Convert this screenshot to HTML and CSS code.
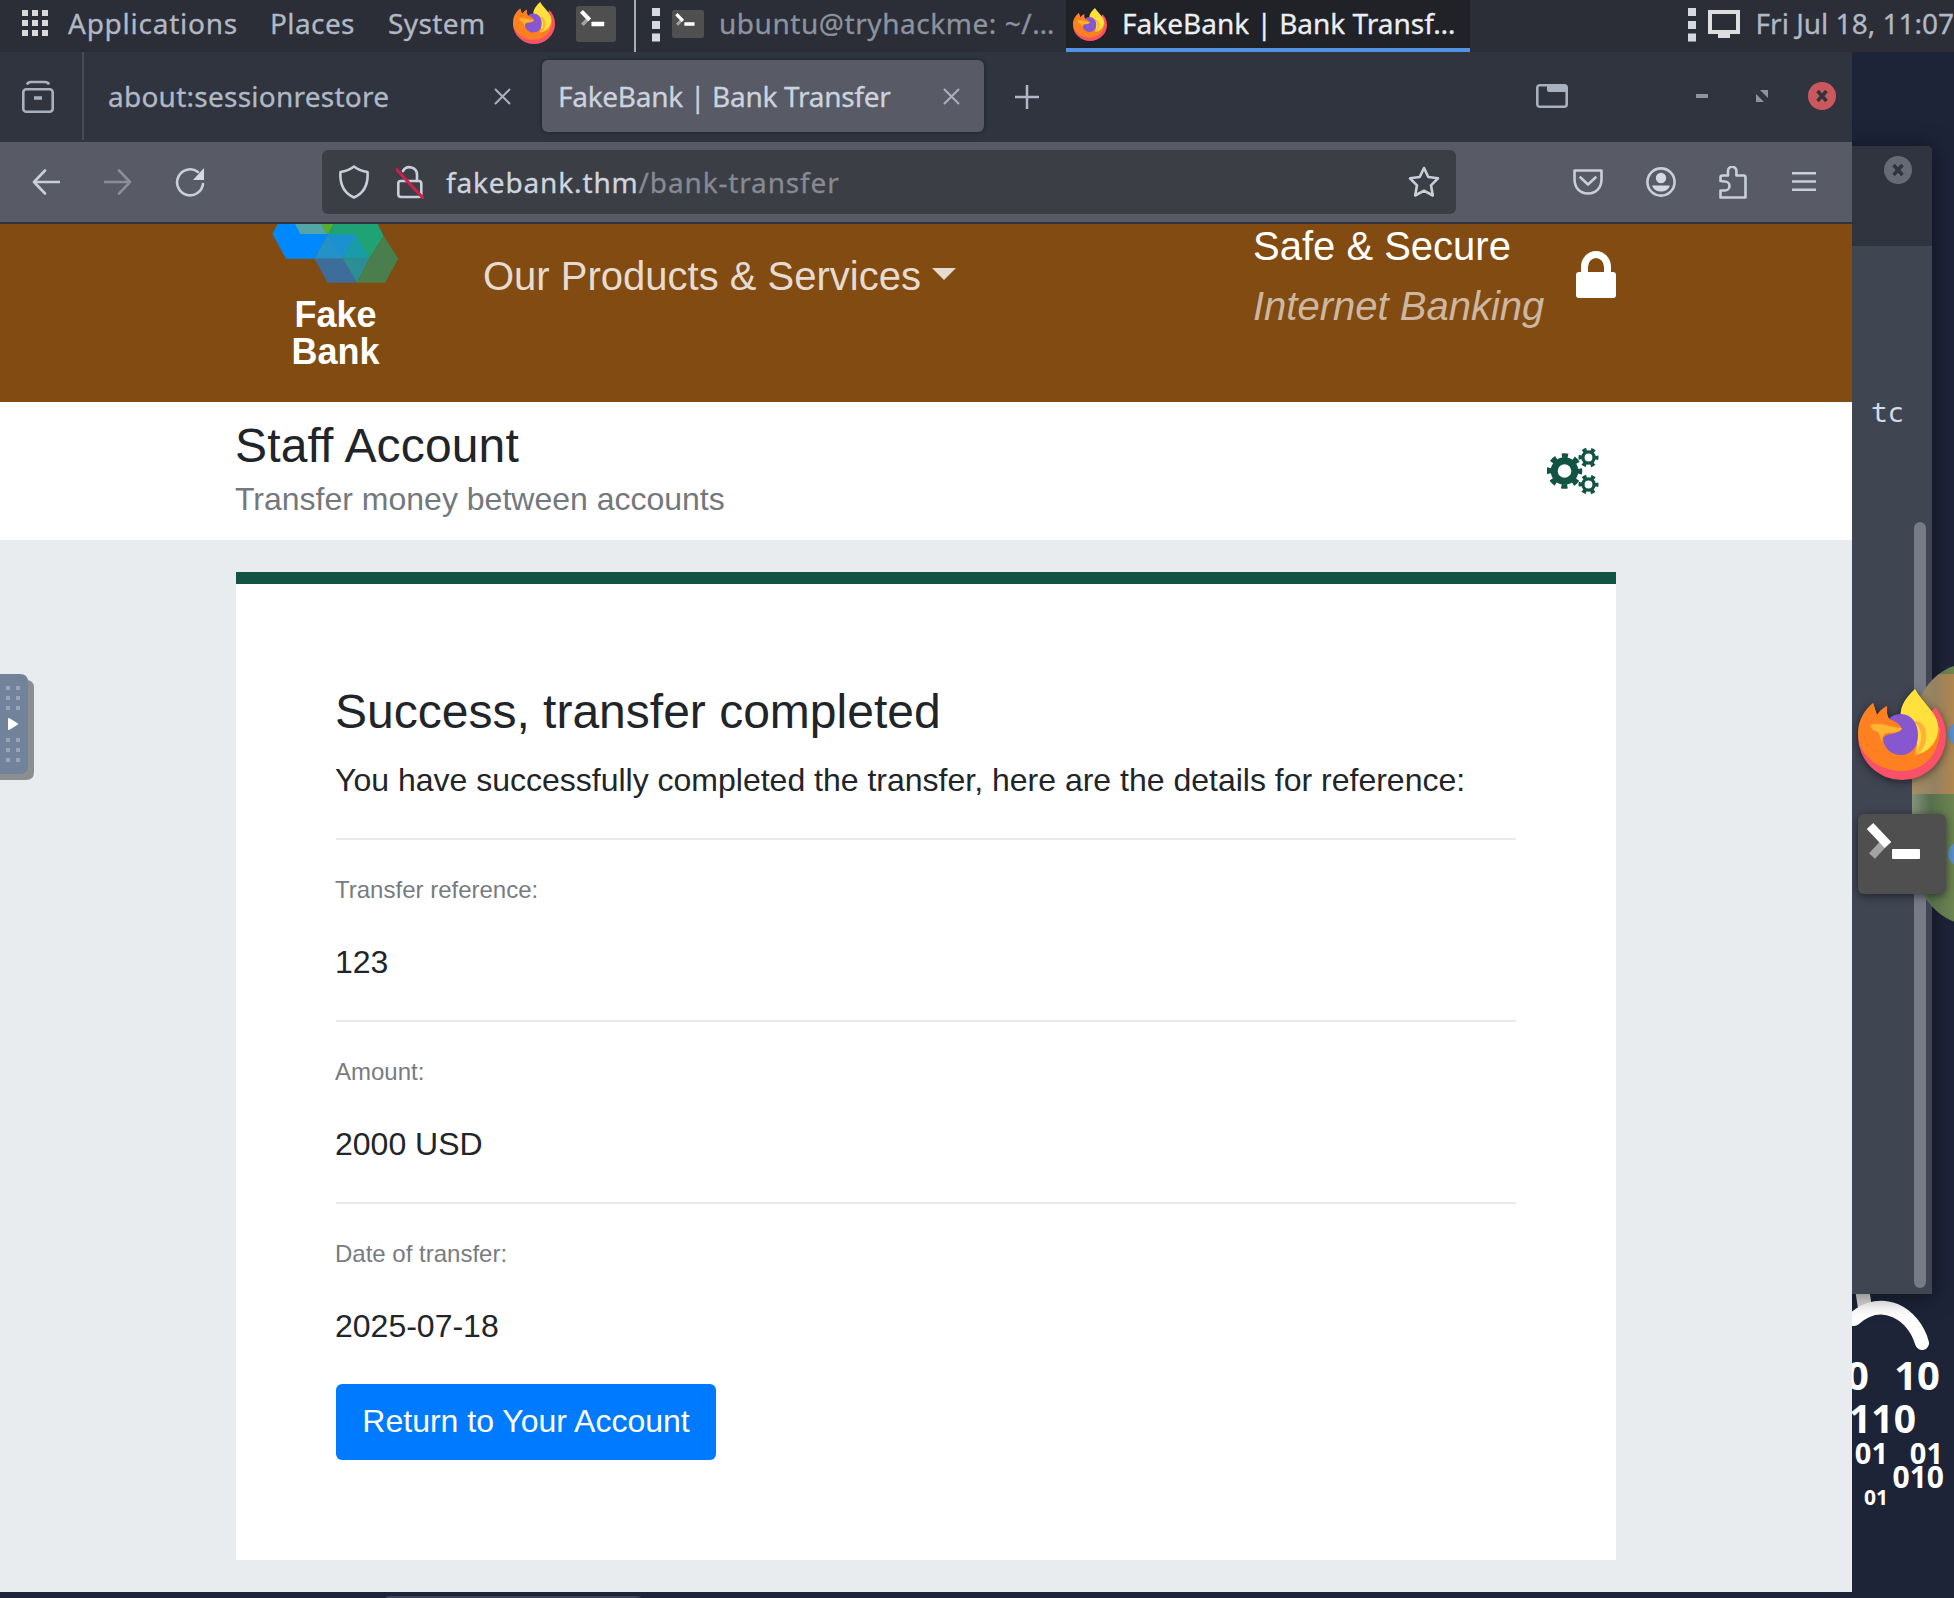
FILE: index.html
```html
<!DOCTYPE html>
<html lang="en">
<head>
<meta charset="utf-8">
<title>FakeBank | Bank Transfer</title>
<link rel="stylesheet" href="styles.css">
</head>
<body>
<svg class="sprite" aria-hidden="true">
  <symbol id="firefox" viewBox="0 0 88 91" preserveAspectRatio="none">
    <path fill="#f9516a" d="M0 47A44 44 0 0 0 88 47C88 36 84 26 77 18L60 40H20Z"/>
    <path fill="#ff8020" d="M0 44C0 31 7 20 15 14L19 26Q23 20 29 17Q28 25 31 30C44 32 52 36 60 42L82 38C83 63 67 82 44 82C20 82 0 66 0 44Z"/>
    <path fill="#ffe03c" d="M57 0C45 11 41 20 43 32C56 34 63 46 57 66C74 63 82 48 80 35C78 23 64 13 57 0Z"/>
    <path fill="#ffb13a" d="M51 31C65 35 67 52 56 67C70 62 72 40 62 33Z"/>
    <path fill="#8657ce" d="M43 25C53 25 60 34 60 46C60 58 53 66 43 66C33 66 25 59 25 48C25 36 30 25 43 25Z"/>
    <path fill="#ff8020" d="M15 14L19 26Q23 20 29 17Q28 25 31 30Q41 33 44 40C40 46 27 43 24 51Q21 42 8 40Z"/>
    <path fill="#ffb530" d="M12 36C20 32 31 38 44 39C42 44 34 44 27 44Q24 47 24 54Q22 46 20 43Q14 42 12 36Z"/>
  </symbol>
  <symbol id="terminal" viewBox="0 0 88 80" preserveAspectRatio="none">
    <rect width="88" height="80" rx="6" fill="#4f4f4f"/>
    <path d="M14 42L27 28" stroke="#a3a3a3" stroke-width="8"/>
    <path d="M12 12L30 31" stroke="#fff" stroke-width="9"/>
    <rect x="34" y="35" width="28" height="10" rx="1" fill="#fff"/>
  </symbol>
</svg>

<div class="desktop">
  <svg class="wallpaper" viewBox="0 0 102 1546" width="102" height="1546">
    <g fill="none" stroke="#fff" stroke-width="14" stroke-linecap="round">
      <path d="M9 1230L13 1256" stroke="#ddd"/>
      <path d="M2 1267C30 1242 62 1262 70 1291"/>
    </g>
    <g fill="#fff" text-anchor="end" class="bits">
      <text x="17" y="1338" font-size="40">0</text>
      <text x="88" y="1338" font-size="40">10</text>
      <text x="64" y="1381" font-size="39">110</text>
      <text x="36" y="1412" font-size="29">101</text>
      <text x="91" y="1412" font-size="29">01</text>
      <text x="92" y="1436" font-size="30">010</text>
      <text x="36" y="1453" font-size="21">01</text>
    </g>
  </svg>

  <section class="terminal-window">
    <header class="terminal-head">
      <svg class="terminal-close" viewBox="0 0 28 28"><circle cx="14" cy="14" r="14" fill="#666a74"/><path d="M9.5 9l9 10m0-10l-9 10" stroke="#2f343f" stroke-width="3.4"/></svg>
    </header>
    <div class="terminal-body">tc<i class="scrollbar"></i></div>
  </section>

  <svg class="cloud" viewBox="0 0 46 262" width="46" height="262">
    <defs>
      <linearGradient id="warm"><stop offset="0" stop-color="#a38d68"/><stop offset=".5" stop-color="#94815f"/><stop offset="1" stop-color="#b5874a"/></linearGradient>
      <linearGradient id="leaf"><stop offset="0" stop-color="#84927c"/><stop offset=".4" stop-color="#566f4e"/><stop offset="1" stop-color="#70884f"/></linearGradient>
      <clipPath id="blob"><path d="M46 2C26 6 0 30 0 70V190C0 228 24 254 46 260Z"/></clipPath>
    </defs>
    <g clip-path="url(#blob)">
      <rect width="46" height="262" fill="url(#leaf)"/>
      <rect y="11" width="46" height="120" fill="url(#warm)"/>
      <circle cx="48" cy="71" r="12" fill="#5a8fce"/>
      <circle cx="48" cy="191" r="12" fill="#5a8fce"/>
    </g>
  </svg>

  <svg class="launcher launcher-fox"><use href="#firefox"/></svg>
  <svg class="launcher launcher-term"><use href="#terminal"/></svg>

  <main class="browser">
    <div class="tabs">
      <div class="recent">
        <svg width="32" height="34" viewBox="0 0 32 34" fill="none" stroke="#a9b1bf" stroke-width="2.6"><rect x="1.3" y="9.3" width="29.4" height="22.4" rx="3"/><path d="M5 4.500Q6 2 9 2H23Q26 2 27 4.500"/><path d="M12 18h8" stroke-width="3.500"/></svg>
      </div>
      <div class="tab">
        <span class="t-session">about:sessionrestore</span>
        <svg class="x" viewBox="0 0 17 17"><path d="M1 1l15 15M16 1L1 16"/></svg>
      </div>
      <div class="tab tab-active">
        <span class="t-bank">FakeBank | Bank Transfer</span>
        <svg class="x" viewBox="0 0 17 17"><path d="M1 1l15 15M16 1L1 16"/></svg>
      </div>
      <svg class="plus" viewBox="0 0 24 24"><path d="M12 0v24M0 12h24"/></svg>
      <div class="controls">
        <svg class="c-list" viewBox="0 0 32 24"><rect x="1.300" y="1.300" width="29.400" height="21.400" rx="2.500" fill="none" stroke="#a9b1bf" stroke-width="2.600"/><path d="M11 1h19v7H13q-2 0-2-2z" fill="#a9b1bf"/></svg>
        <svg class="c-min" viewBox="0 0 12 12"><path d="M0 4h12v4H0z" fill="#90939b"/></svg>
        <svg class="c-max" viewBox="0 0 12 12"><path d="M4 0h8v8zM0 4l8 8H0z" fill="#90939b"/></svg>
        <svg class="c-close" viewBox="0 0 28 28"><circle cx="14" cy="14" r="14" fill="#cc575d"/><path d="M9.500 9l9 10m0-10l-9 10" stroke="#2f343f" stroke-width="3.400"/></svg>
      </div>
    </div>

    <div class="nav">
      <svg class="n-back" viewBox="0 0 28 26"><path d="M28 13H2M13 1.500L2 13l11 11.500"/></svg>
      <svg class="n-fwd" viewBox="0 0 28 26"><path d="M0 13h26M15 1.500L26 13 15 24.500"/></svg>
      <svg class="n-reload" viewBox="0 0 30 30"><path d="M23 5A13 13 0 1 0 28 17"/><path d="M29 1v12H18z" fill="#d3dae3" stroke="none"/></svg>
      <div class="url">
        <svg class="u-shield" viewBox="0 0 30 34"><path d="M15 1.500Q21 6 28.500 7C29.500 20 25 28 15 32.500C5 28 .5 20 1.500 7Q9 6 15 1.500Z"/></svg>
        <svg class="u-lock" viewBox="0 0 28 34"><rect x="2.300" y="16" width="23" height="16" rx="2.500"/><path d="M21 16V9.500A7.500 7.500 0 0 0 7 6"/><path d="M0 4l27 29" stroke="#c8224d" stroke-width="3"/></svg>
        <span class="u-text"><b>fakebank.thm</b>/bank-transfer</span>
        <svg class="u-star" viewBox="0 0 32 32"><path d="M16 2l4.300 9 9.700 1.300-7 7 1.800 10.200-8.800-4.800-8.800 4.800L9 19.300l-7-7L11.700 11z"/></svg>
      </div>
      <svg class="n-pocket" viewBox="0 0 30 26"><path d="M1.500 1.500h27v8.500C28.500 19 23 24.500 15 24.500S1.500 19 1.500 10zM7.500 8.500l7.500 7 7.500-7"/></svg>
      <svg class="n-user" viewBox="0 0 30 30"><circle cx="15" cy="15" r="13.600"/><g fill="#d3dae3" stroke="none"><circle cx="15" cy="11" r="5.200"/><path d="M6 18.500h18q-2 6-9 6t-9-6z"/></g></svg>
      <svg class="n-ext" viewBox="0 0 28 33"><path d="M1.500 15V11.500q0-2 2-2H9V5a4.200 4.200 0 0 1 8.400 0v4.500H24.500q2 0 2 2V31.500h-25V24.500H6a4.500 4.500 0 0 0 0-9z"/></svg>
      <svg class="n-menu" viewBox="0 0 24 22"><path d="M0 2.300h24M0 10.500h24M0 18.700h24"/></svg>
    </div>

    <div class="page">
      <header class="bank-head">
        <div class="logo">
          <svg viewBox="0 0 450 216" width="150" height="72" preserveAspectRatio="none">
            <path fill="#0089ff" d="M34 30L50 0H218L200 32 160 104H75z"/>
            <path fill="#53a6a5" d="M102 0h80l15 30h-79z"/>
            <path fill="#57ae28" d="M182 0h36l-15 30h-6z"/>
            <path fill="#1fa274" d="M218 0H350l18 36-43 68-125-72z"/>
            <path fill="#2492c9" d="M200 32h84l-39 72h-85z"/>
            <path fill="#1b92cf" d="M200 32h84l-39 72z"/>
            <path fill="#189caa" d="M284 32l41 72h-80z"/>
            <path fill="#3c6d9b" d="M160 104h85l43 72h-88z"/>
            <path fill="#2c8f96" d="M245 104h80l-37 72z"/>
            <path fill="#4a7e4c" d="M368 36l44 68-40 72h-84l37-72z"/>
          </svg>
          <strong>Fake<br>Bank</strong>
        </div>
        <div class="products">Our Products &amp; Services<i class="caret"></i></div>
        <div class="secure">Safe &amp; Secure<br><em>Internet Banking</em></div>
        <svg class="lock" viewBox="0 0 40 47"><path d="M8.500 24V16a11.500 12.500 0 0 1 23 0v8" fill="none" stroke="#fff" stroke-width="7"/><rect y="21" width="40" height="26" rx="3" fill="#fff"/></svg>
      </header>

      <section class="account">
        <div>
          <h1>Staff Account</h1>
          <p>Transfer money between accounts</p>
        </div>
        <svg class="gears" viewBox="0 0 52 48" fill="none" stroke="#125443">
          <circle cx="17.500" cy="24" r="10.300" stroke-width="7"/>
          <circle cx="17.500" cy="24" r="15.500" stroke-width="4.500" stroke-dasharray="6.200 5.970" stroke-dashoffset="3.100"/>
          <circle cx="41.500" cy="10.500" r="5.600" stroke-width="3.400"/>
          <circle cx="41.500" cy="10.500" r="8.300" stroke-width="3.400" stroke-dasharray="4.200 4.490" stroke-dashoffset="2.100"/>
          <circle cx="41.500" cy="37.500" r="5.600" stroke-width="3.400"/>
          <circle cx="41.500" cy="37.500" r="8.300" stroke-width="3.400" stroke-dasharray="4.200 4.490" stroke-dashoffset="2.100"/>
        </svg>
      </section>

      <article class="card">
        <h2>Success, transfer completed</h2>
        <p class="lead">You have successfully completed the transfer, here are the details for reference:</p>
        <dl><dt>Transfer reference:</dt><dd>123</dd></dl>
        <dl><dt>Amount:</dt><dd>2000 USD</dd></dl>
        <dl><dt>Date of transfer:</dt><dd>2025-07-18</dd></dl>
        <a class="button">Return to Your Account</a>
      </article>
    </div>
  </main>

  <header class="panel">
    <svg class="p-grid" viewBox="0 0 26 26" fill="#d9d9d9"><path d="M0 0h6v6H0zM10 0h6v6h-6zM20 0h6v6h-6zM0 10h6v6H0zM10 10h6v6h-6zM20 10h6v6h-6zM0 20h6v6H0zM10 20h6v6h-6zM20 20h6v6h-6z"/></svg>
    <span class="p-apps">Applications</span>
    <span class="p-places">Places</span>
    <span class="p-system">System</span>
    <svg class="p-fox"><use href="#firefox"/></svg>
    <svg class="p-term"><use href="#terminal"/></svg>
    <i class="p-sep"></i>
    <svg class="grip" viewBox="0 0 8 34"><path d="M0 0h8v8H0zM0 13h8v8H0zM0 25.500h8v8H0z"/></svg>
    <svg class="p-term2"><use href="#terminal"/></svg>
    <span class="p-task">ubuntu@tryhackme: ~/…</span>
    <div class="p-active">
      <svg><use href="#firefox"/></svg>
      <span>FakeBank | Bank Transf…</span>
    </div>
    <svg class="grip grip-right" viewBox="0 0 8 34"><path d="M0 0h8v8H0zM0 13h8v8H0zM0 25.500h8v8H0z"/></svg>
    <svg class="p-mon" viewBox="0 0 32 28"><rect x="2" y="2" width="28" height="20" fill="none" stroke="#dedede" stroke-width="4"/><path d="M10 24h12v4H10z" fill="#dedede"/></svg>
    <span class="p-clock">Fri Jul 18, 11:07</span>
  </header>

  <svg class="handle" viewBox="0 0 34 106">
    <path d="M0 6h26q8 0 8 8v84q0 8-8 8H0z" fill="#8c8d8e"/>
    <path d="M0 0h20q8 0 8 8v84q0 8-8 8H0z" fill="#71839b"/>
    <path d="M6 12h4v4H6zM16 12h4v4h-4zM6 22h4v4H6zM16 22h4v4h-4zM6 32h4v4H6zM16 32h4v4h-4zM6 64h4v4H6zM16 64h4v4h-4zM6 74h4v4H6zM16 74h4v4h-4zM6 84h4v4H6zM16 84h4v4h-4z" fill="#98a5b6"/>
    <path d="M9 45l8 5-8 5z" fill="#fff" stroke="#fff" stroke-width="2" stroke-linejoin="round"/>
  </svg>
  <i class="taskbar-item"></i>
</div>
</body>
</html>
```
FILE: styles.css
```css
* { box-sizing: border-box; }
body { margin: 0; font-family: "Liberation Sans", Arial, sans-serif; }
svg { display: block; flex: none; }
.sprite { position: absolute; width: 0; height: 0; }
.desktop { position: relative; width: 1954px; height: 1598px; overflow: hidden; background: #1d2438; }

/* Desktop wallpaper and windows */
.wallpaper { position: absolute; left: 1852px; top: 52px; }
.bits { font-family: "Noto Sans", sans-serif; font-weight: 700; }
.terminal-window { position: absolute; left: 1752px; top: 146px; width: 180px; height: 1148px; border-radius: 5px 5px 0 0; background: #404552; box-shadow: 0 2px 22px rgba(0,0,0,.5); }
.terminal-head { height: 100px; padding: 10px 20px 0 0; background: #2f343f; border-radius: 5px 5px 0 0; }
.terminal-close { width: 28px; height: 28px; margin-left: auto; }
.terminal-body { padding: 147px 0 0 119px; font: 28px/36px "Noto Sans Mono", "DejaVu Sans Mono", monospace; color: #d3dae3; }
.scrollbar { position: absolute; left: 162px; top: 376px; width: 12px; height: 766px; border-radius: 6px; background: #767a87; }
.cloud { position: absolute; left: 1912px; top: 663px; width: 46px; }
.launcher { position: absolute; left: 1858px; width: 88px; filter: drop-shadow(0 2px 4px rgba(0,0,0,.5)); }
.launcher-fox { top: 689px; height: 91px; }
.launcher-term { top: 814px; height: 80px; }
.taskbar-item { position: absolute; left: 385px; top: 1596px; width: 256px; height: 8px; border-radius: 4px; background: #3e445a; }
.handle { position: absolute; left: 0; top: 674px; width: 34px; height: 106px; }

/* Top panel */
.panel { position: absolute; inset: 0 0 auto 0; height: 52px; padding-left: 22px; display: flex; align-items: flex-start; background: #2b2e37; color: #b0b8c5; font: 28px/46px "Noto Sans", sans-serif; white-space: nowrap; }
.panel span { flex: none; }
.panel, .tabs, .url { -webkit-text-stroke: .3px; }
.p-grid { width: 26px; height: 26px; margin-top: 10px; }
.p-apps { width: 202px; padding-left: 20px; letter-spacing: .75px; }
.p-places { width: 118px; padding-left: 20px; letter-spacing: .4px; }
.p-system { width: 125px; padding-left: 20px; letter-spacing: .4px; }
.p-fox { width: 42px; height: 42px; margin: 2px 0 0 20px; }
.p-term { width: 40px; height: 36px; margin: 6px 0 0 21px; }
.p-sep { width: 2px; height: 52px; margin-left: 18px; background: #a7adba; }
.grip { width: 8px; height: 34px; margin: 8px 0 0 16px; fill: #d3dae3; }
.p-term2 { width: 32px; height: 28px; margin: 10px 0 0 12px; }
.p-task { width: 362px; padding-left: 15px; color: #8b939f; letter-spacing: .55px; }
.p-active { width: 404px; height: 52px; display: flex; background: #202228; border-bottom: 4px solid #5294e2; color: #eceef2; }
.p-active svg { width: 34px; height: 33px; margin: 8px 0 0 7px; }
.p-active span { padding-left: 15px; }
.grip-right { margin-left: 218px; }
.p-mon { width: 32px; height: 28px; margin: 10px 0 0 12px; }
.p-clock { padding-left: 16px; }

/* Browser chrome */
.browser { position: absolute; left: 0; top: 52px; width: 1852px; height: 1540px; background: #e8ecef; overflow: hidden; }
.tabs { height: 90px; display: flex; align-items: flex-start; padding-top: 8px; background: #2f343f; color: #b0b8c5; font: 28px/72px "Noto Sans", sans-serif; white-space: nowrap; }
.recent { width: 84px; height: 88px; margin-top: -8px; padding: 28px 0 0 22px; border-right: 2px solid #454b57; }
.tab { display: flex; height: 72px; width: 440px; margin-left: 6px; padding-left: 18px; align-items: flex-start; }
.tab span { width: 386px; }
.t-session { letter-spacing: .25px; }
.tab.tab-active { width: 442px; margin-left: 12px; padding-left: 16px; border-radius: 6px; background: #585a66; color: #ccd3de; box-shadow: 0 0 4px rgba(0,0,0,.4); }
.tab-active .t-bank { width: 385px; letter-spacing: -.28px; }
.x { width: 17px; height: 17px; margin-top: 28px; stroke: #a9b1bf; stroke-width: 2; }
.plus { width: 24px; height: 24px; margin: 25px 0 0 31px; stroke: #b0b8c5; stroke-width: 2.500; }
.controls { display: flex; align-items: center; height: 72px; margin-left: auto; padding-right: 16px; }
.c-list { width: 32px; height: 24px; margin-right: 128px; }
.c-min { width: 12px; height: 12px; margin-right: 48px; }
.c-max { width: 12px; height: 12px; margin-right: 40px; }
.c-close { width: 28px; height: 28px; }
.nav { height: 82px; display: flex; align-items: center; padding: 0 36px 0 32px; background: #585a66; border-bottom: 2px solid #33353e; }
.nav svg { fill: none; stroke: #c8cfda; stroke-width: 2.600; stroke-linejoin: round; stroke-linecap: round; }
.n-back { width: 28px; height: 26px; }
.nav .n-fwd { width: 28px; height: 26px; margin-left: 44px; stroke: #8b8e99; }
.n-reload { width: 30px; height: 30px; margin-left: 43px; }
.url { width: 1134px; height: 64px; display: flex; align-items: center; margin-left: 117px; padding: 0 16px 0 17px; border-radius: 6px; background: #3c3e46; font: 28px/64px "Noto Sans", sans-serif; color: #858a93; white-space: nowrap; }
.url b { font-weight: 400; color: #cfd5df; }
.u-shield { width: 30px; height: 34px; }
.u-lock { width: 28px; height: 34px; margin-left: 27px; }
.u-text { margin-left: 22px; letter-spacing: .85px; }
.u-star { width: 32px; height: 32px; margin-left: auto; }
.n-pocket { width: 30px; height: 26px; margin-left: 117px; }
.n-user { width: 30px; height: 30px; margin-left: 43px; }
.n-ext { width: 28px; height: 33px; margin-left: 43px; }
.n-menu { width: 24px; height: 22px; margin-left: auto; }

/* Bank page */
.bank-head { height: 178px; display: flex; align-items: flex-start; padding: 0 236px; background: #824b12; color: #fff; font-size: 40px; white-space: nowrap; }
.logo { width: 150px; margin-left: 25px; font-size: 36px; line-height: 37px; text-align: center; }
.logo strong { display: block; margin-left: -1px; }
.products { margin-left: 72px; line-height: 60px; padding-top: 22px; display: flex; align-items: center; color: #e6dbd0; }
.caret { border: 12px solid transparent; border-top-color: #e6dbd0; border-bottom: 0; margin: 0 0 4px 11px; }
.secure { margin-left: auto; width: 323px; line-height: 60px; margin-top: -8px; }
.secure em { color: #cdb7a0; }
.lock { width: 40px; height: 47px; margin-top: 27px; }
.account { height: 138px; display: flex; justify-content: space-between; align-items: flex-start; padding: 15px 236px 0 235px; background: #fff; }
h1, h2, p, dl, dd { margin: 0; font-weight: 400; }
h1, h2 { font-size: 48px; line-height: 58px; color: #212529; }
h1 { letter-spacing: .15px; }
.account p { font-size: 32px; line-height: 48px; color: #73787d; }
.gears { width: 52px; height: 48px; margin: 30px 17px 0 0; }
.card { width: 1380px; height: 988px; margin: 32px auto 0; padding: 99px 100px 0; border-top: 12px solid #125443; background: #fff; color: #212529; font-size: 32px; line-height: 48px; }
.card h2, .card .lead, .card dt, .card dd { text-indent: -1px; }
.lead { margin: 15px 0 34px; white-space: nowrap; }
.card dl { height: 182px; border-top: 2px solid #e9e9e9; padding-top: 32px; }
.card dt { font-size: 24px; line-height: 36px; color: #777c81; }
.card dd { margin-top: 30px; }
.button { display: block; width: 380px; height: 76px; border-radius: 6px; background: #007bff; color: #fff; line-height: 74px; text-align: center; }
```
